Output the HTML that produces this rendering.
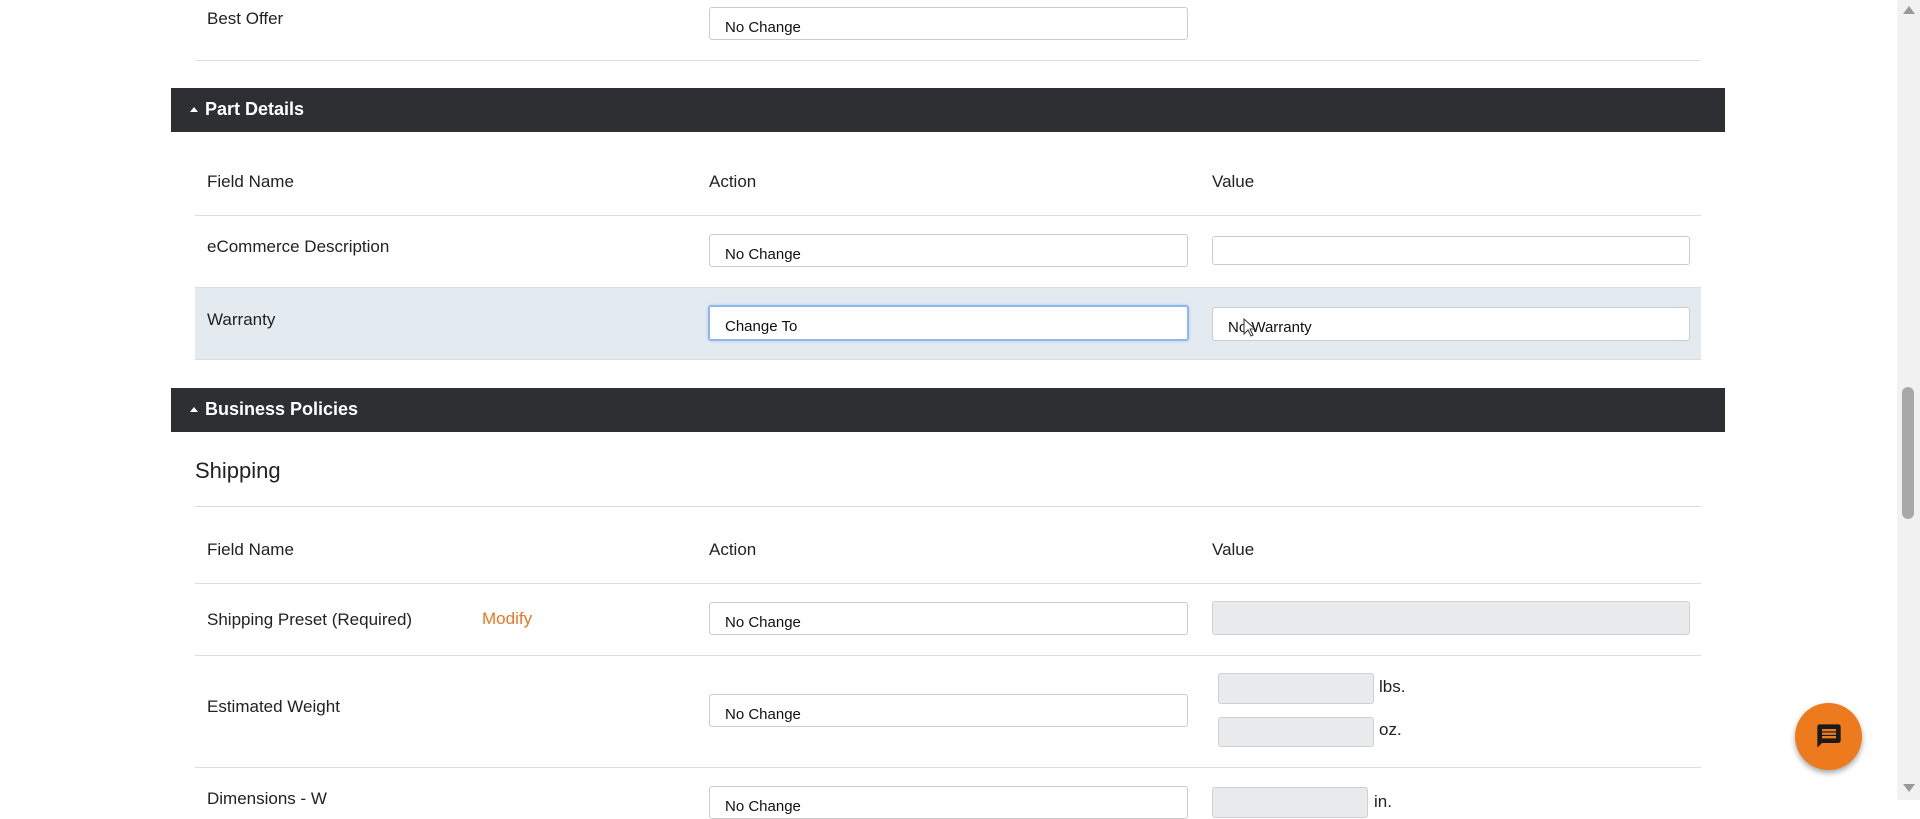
<!DOCTYPE html>
<html><head><meta charset="utf-8"><style>
*{box-sizing:border-box;margin:0;padding:0}
body{width:1920px;height:800px;overflow:hidden;background:#fff;font-family:"Liberation Sans",sans-serif;color:#222;position:relative}
.a{position:absolute}
.lbl{font-size:17px;color:#222;line-height:20px}
.inp{position:absolute;background:#fff;border:1px solid #ccc;border-radius:3px;font-size:15px;padding-left:15px;padding-top:5px;line-height:30px;color:#111;overflow:hidden}
.gray{background:#e9eaec;border-color:#cfd0d2}
.line{position:absolute;left:195px;width:1506px;height:1px;background:#ddd}
.bar{position:absolute;left:171px;width:1554px;height:44px;background:#2d2f33;color:#fff;font-weight:bold;font-size:18px;line-height:42px;padding-left:34px}
.bar:before{content:"";position:absolute;left:19px;top:19px;border-left:4px solid transparent;border-right:4px solid transparent;border-bottom:5px solid #fff}
</style></head><body>
<div class="a lbl" style="left:207px;top:9px">Best Offer</div>
<div class="inp" style="left:709px;top:7px;width:479px;height:33px">No Change</div>
<div class="line" style="top:60px"></div>

<div class="bar" style="top:88px">Part Details</div>
<div class="a lbl" style="left:207px;top:172px">Field Name</div>
<div class="a lbl" style="left:709px;top:172px">Action</div>
<div class="a lbl" style="left:1212px;top:172px">Value</div>
<div class="line" style="top:215px"></div>
<div class="a lbl" style="left:207px;top:237px">eCommerce Description</div>
<div class="inp" style="left:709px;top:234px;width:479px;height:33px">No Change</div>
<div class="inp" style="left:1212px;top:236px;width:478px;height:29px"></div>
<div class="a" style="left:195px;top:287px;width:1506px;height:73px;background:#e3ebf1;border-top:1px solid #ddd;border-bottom:1px solid #ddd"></div>
<div class="a lbl" style="left:207px;top:310px">Warranty</div>
<div class="inp" style="left:708px;top:305px;width:481px;height:36px;border:2px solid #8fb7ea;box-shadow:0 0 3px #a9c8f0;padding-top:5px">Change To</div>
<div class="inp" style="left:1212px;top:307px;width:478px;height:34px">No Warranty</div>
<svg class="a" style="left:1243px;top:318px" width="14" height="20" viewBox="0 0 14 20"><path d="M1 1 L1 16 L5 12 L8 18 L10 17 L7 11 L12 11 Z" fill="#fff" stroke="#333" stroke-width="1"/></svg>

<div class="bar" style="top:388px">Business Policies</div>
<div class="a" style="left:195px;top:458px;font-size:22px;color:#222">Shipping</div>
<div class="line" style="top:506px"></div>
<div class="a lbl" style="left:207px;top:540px">Field Name</div>
<div class="a lbl" style="left:709px;top:540px">Action</div>
<div class="a lbl" style="left:1212px;top:540px">Value</div>
<div class="line" style="top:583px"></div>
<div class="a lbl" style="left:207px;top:610px">Shipping Preset (Required)</div>
<div class="a lbl" style="left:482px;top:609px;color:#e87722">Modify</div>
<div class="inp" style="left:709px;top:602px;width:479px;height:33px">No Change</div>
<div class="inp gray" style="left:1212px;top:601px;width:478px;height:34px"></div>
<div class="line" style="top:655px"></div>
<div class="a lbl" style="left:207px;top:697px">Estimated Weight</div>
<div class="inp" style="left:709px;top:694px;width:479px;height:33px">No Change</div>
<div class="inp gray" style="left:1218px;top:673px;width:156px;height:31px"></div>
<div class="a lbl" style="left:1379px;top:677px">lbs.</div>
<div class="inp gray" style="left:1218px;top:717px;width:156px;height:30px"></div>
<div class="a lbl" style="left:1379px;top:720px">oz.</div>
<div class="line" style="top:767px"></div>
<div class="a lbl" style="left:207px;top:789px">Dimensions - W</div>
<div class="inp" style="left:709px;top:786px;width:479px;height:33px">No Change</div>
<div class="inp gray" style="left:1212px;top:787px;width:156px;height:31px"></div>
<div class="a lbl" style="left:1374px;top:792px">in.</div>

<div class="a" style="left:1897px;top:0;width:23px;height:800px;background:#f1f1f1"></div>
<div class="a" style="left:1902px;top:387px;width:12px;height:132px;background:#a8a8a8;border-radius:6px"></div>
<div class="a" style="left:1903px;top:6px;border-left:6px solid transparent;border-right:6px solid transparent;border-bottom:8px solid #999"></div>
<div class="a" style="left:1903px;top:784px;border-left:6px solid transparent;border-right:6px solid transparent;border-top:8px solid #999"></div>

<div class="a" style="left:1795px;top:703px;width:67px;height:67px;border-radius:50%;background:#ee7a1e;box-shadow:0 3px 6px rgba(0,0,0,.35)"></div>
<svg class="a" style="left:1815px;top:722px" width="28" height="28" viewBox="0 0 24 24"><path d="M20 2H4c-1.1 0-2 .9-2 2v18l4-4h14c1.1 0 2-.9 2-2V4c0-1.1-.9-2-2-2zM18 14H6v-2h12v2zm0-3H6V9h12v2zm0-3H6V6h12v2z" fill="#1a1a1a"/></svg>
</body></html>
